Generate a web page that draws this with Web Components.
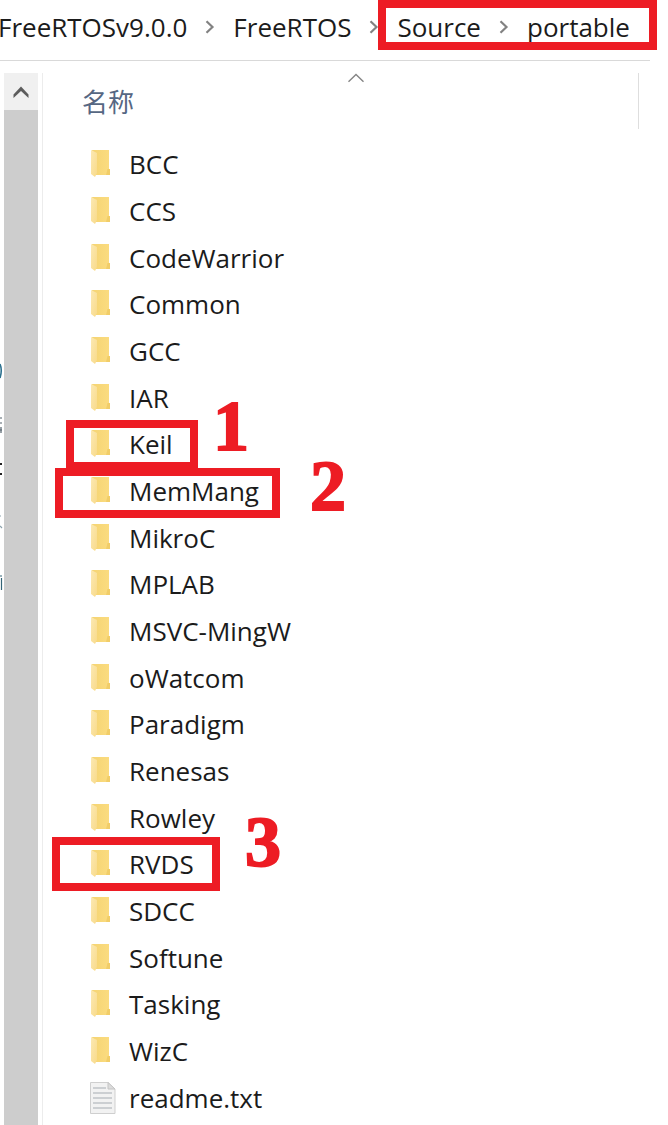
<!DOCTYPE html>
<html lang="zh-CN">
<head>
<meta charset="utf-8">
<title>portable</title>
<style>
  body { margin: 0; background: #fff; color: #1b1b1b; font: 26px/36px "Open Sans", "Noto Sans CJK SC", sans-serif; }
</style>
</head>
<body>
<file-explorer></file-explorer>
<script>
const define = (name, html, setup) => {
  const template = document.createElement('template');
  template.innerHTML = html;
  customElements.define(name, class extends HTMLElement {
    constructor() {
      super();
      this.attachShadow({ mode: 'open' }).append(template.content.cloneNode(true));
    }
    connectedCallback() { if (setup) setup(this, this.shadowRoot); }
  });
};

// Red frame laid over whatever it annotates, with an optional large number beside it
define('mark-frame', `
  <style>
    :host { position: absolute; z-index: 1; box-sizing: border-box; border: 8px solid #ed1c24; pointer-events: none; }
    ::slotted(b) { position: absolute; left: 100%; bottom: 0; margin-left: var(--gap, 20px); margin-bottom: var(--lift, 0px);
      font: bold 72px/48px "Liberation Serif", serif; color: #ed1c24; -webkit-text-stroke: 2px #ed1c24; }
  </style>
  <slot></slot>`);

define('crumb-arrow', `
  <style>
    :host { display: flex; flex: none; width: 46px; justify-content: center; align-items: center; }
    svg { display: block; }
  </style>
  <svg width="10" height="14" viewBox="0 0 10 14" fill="none" stroke="#828282" stroke-width="2.2" aria-hidden="true"><path d="M1.5 1.2 7.5 7 1.5 12.8"/></svg>`);

define('path-bar', `
  <style>
    :host { display: block; margin-right: 18px; border-bottom: 1px solid #d9d9d9; }
    nav { display: flex; height: 60px; padding-bottom: 6px; box-sizing: border-box; align-items: center; margin-left: -2px; white-space: nowrap; }
    .target { position: relative; display: flex; height: 54px; align-items: center; }
    a { color: inherit; text-decoration: none; }
    mark-frame { left: -19px; right: -27px; top: 0; height: 50px; }
  </style>
  <nav aria-label="Path">
    <a href="#v9">FreeRTOSv9.0.0</a><crumb-arrow></crumb-arrow>
    <a href="#rtos">FreeRTOS</a><crumb-arrow></crumb-arrow>
    <div class="target"><a href="#source">Source</a><crumb-arrow></crumb-arrow><a href="#portable">portable</a><mark-frame></mark-frame></div>
  </nav>`);

// Trailing edge of the navigation pane, where its labels run under the scrollbar
define('pane-edge', `
  <style>:host { display: block; width: 4px; overflow: hidden; } svg { display: block; }</style>
  <svg width="4" height="560" viewBox="0 0 4 560" fill="none" stroke="#53616b" stroke-width="1.2" aria-hidden="true">
    <path d="M0 291Q2.5 297 0 305" stroke="#2c718f" stroke-width="1.6"/>
    <path d="M0 345H2M0 350H2M1 354V360M0 357H2"/>
    <path d="M0 391H2M0 401H2" stroke="#222" stroke-width="2"/>
    <path d="M0 443H1M0 453 2 455" stroke="#8aa0aa"/>
    <path d="M0 503H2M1.5 505V517" stroke="#356577"/>
  </svg>`);

define('scroll-bar', `
  <style>
    :host { display: flex; flex-direction: column; width: 34px; background: #cdcdcd; }
    button { display: flex; height: 37px; padding: 0; border: 0; background: #f0f0f0; align-items: center; justify-content: center; }
  </style>
  <button type="button" aria-label="Scroll up"><svg width="18" height="14" viewBox="0 0 18 14" fill="#5c5c5c" aria-hidden="true"><path d="M1.5 9.5 9 1.5 16.5 9.5V13L9 6 1.5 13Z"/></svg></button>`);

define('column-header', `
  <style>
    :host { display: grid; grid-template-columns: 1fr auto; height: 56px; margin-right: 29px; border-right: 1px solid #dedede; }
    button { display: grid; grid-template-columns: 1fr auto 1fr; padding: 0 0 0 39px; border: 0; background: none; color: #566783; font: inherit; text-align: left; align-items: start; }
    span { padding-top: 11px; }
    svg { display: block; margin-right: 9px; }
  </style>
  <button type="button"><span><slot></slot></span><svg width="18" height="10" viewBox="0 0 18 10" fill="none" stroke="#858585" stroke-width="1.4" aria-hidden="true"><path d="M1.5 8.7 9 1.5 16.5 8.7"/></svg></button>`);

define('folder-icon', `
  <style>:host { display: block; width: 28px; height: 32px; } svg { display: block; }</style>
  <svg width="28" height="32" viewBox="0 0 28 32" aria-hidden="true">
    <defs>
      <linearGradient id="b" x2="1" y2="0"><stop stop-color="#f5d473"/><stop offset="1" stop-color="#fbdc80"/></linearGradient>
      <linearGradient id="f" x2="1" y2="1"><stop stop-color="#fce9b3"/><stop offset="1" stop-color="#f8da8a"/></linearGradient>
    </defs>
    <path d="M3 2H20V21L21 22V27H7Z" fill="url(#b)"/>
    <path d="M18.500 21H21V27H17Z" fill="#f1cd68"/>
    <path d="M2 2 8 5V25L6 29 2 26Z" fill="url(#f)"/>
  </svg>`);

define('text-icon', `
  <style>:host { display: block; width: 28px; height: 34px; } svg { display: block; }</style>
  <svg width="28" height="34" viewBox="0 0 28 34" aria-hidden="true">
    <path d="M1.500 1.500H19L26 8V32.500H1.500Z" fill="#f2f2f2" stroke="#cfcfcf"/>
    <path d="M19 1.500V8H26Z" fill="#dcdcdc" stroke="#c4c4c4"/>
    <path d="M4 7H17M4 12H23M4 17H23M4 22H23M4 27H23" stroke="#c0c4c7" stroke-width="1.500"/>
  </svg>`);

define('file-row', `
  <style>
    :host { position: relative; display: flex; align-items: center; padding: 0 0 4px 46px; }
    .icon { flex: none; width: 40px; }
    a { color: inherit; text-decoration: none; white-space: nowrap; }
  </style>
  <span class="icon"></span><a href="#"><span></span></a><slot></slot>`,
  (host, root) => {
    const name = host.getAttribute('name');
    root.querySelector('.icon').replaceChildren(document.createElement(host.getAttribute('kind') === 'text' ? 'text-icon' : 'folder-icon'));
    root.querySelector('a span').textContent = name;
    root.querySelector('a').href = '#' + name;
  });

define('file-list', `
  <style>
    :host { display: grid; grid-auto-rows: minmax(44px, 1fr); padding: 14px 0 2px; }
    mark-frame { top: -3px; height: 50px; }
    .keil { left: 23px; width: 132px; --gap: 23px; --lift: 12px; }
    .mem { left: 12px; width: 225px; --gap: 38px; --lift: 0px; top: -2px; }
    .rvds { left: 9px; width: 168px; top: -6px; height: 54px; --gap: 33px; --lift: 17px; }
  </style>`,
  (host, root) => {
    const marks = { Keil: ['keil', '1'], MemMang: ['mem', '2'], RVDS: ['rvds', '3'] };
    const names = ['BCC', 'CCS', 'CodeWarrior', 'Common', 'GCC', 'IAR', 'Keil', 'MemMang', 'MikroC', 'MPLAB', 'MSVC-MingW',
      'oWatcom', 'Paradigm', 'Renesas', 'Rowley', 'RVDS', 'SDCC', 'Softune', 'Tasking', 'WizC', 'readme.txt'];
    host.setAttribute('role', 'list');
    for (const name of names) {
      const row = document.createElement('file-row');
      row.setAttribute('role', 'listitem');
      row.setAttribute('name', name);
      if (name.endsWith('.txt')) row.setAttribute('kind', 'text');
      root.append(row);
      if (marks[name]) {
        const frame = document.createElement('mark-frame');
        const number = document.createElement('b');
        frame.className = marks[name][0];
        number.textContent = marks[name][1];
        frame.append(number);
        row.append(frame);
      }
    }
  });

define('file-explorer', `
  <style>
    :host { display: flex; flex-direction: column; min-height: 100vh; overflow: hidden; }
    main { flex: 1; display: grid; grid-template-columns: auto auto 1fr; padding-top: 12px; }
    section { display: flex; flex-direction: column; margin-left: 4px; border-left: 1px solid #ececec; }
    file-list { flex: 1; }
  </style>
  <path-bar></path-bar>
  <main>
    <pane-edge></pane-edge>
    <scroll-bar></scroll-bar>
    <section>
      <column-header>名称</column-header>
      <file-list></file-list>
    </section>
  </main>`);
</script>
</body>
</html>
